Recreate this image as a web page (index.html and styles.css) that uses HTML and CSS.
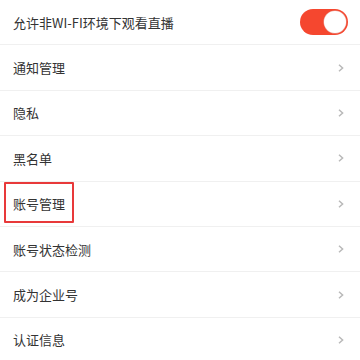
FILE: index.html
```html
<!DOCTYPE html>
<html lang="zh-CN">
<head>
<meta charset="utf-8">
<link rel="stylesheet" href="styles.css">
</head>
<body>
<ul class="list">
  <li class="row">
    <span class="label">允许非WI-FI环境下观看直播</span>
    <span class="switch on"><span class="knob"></span></span>
  </li>
  <li class="row">
    <span class="label">通知管理</span>
    <svg class="chev" viewBox="0 0 6 8" width="6" height="8"><path d="M1 0.8 L4.6 4 L1 7.2" fill="none" stroke="#b9b9b9" stroke-width="1.5"/></svg>
  </li>
  <li class="row">
    <span class="label">隐私</span>
    <svg class="chev" viewBox="0 0 6 8" width="6" height="8"><path d="M1 0.8 L4.6 4 L1 7.2" fill="none" stroke="#b9b9b9" stroke-width="1.5"/></svg>
  </li>
  <li class="row">
    <span class="label">黑名单</span>
    <svg class="chev" viewBox="0 0 6 8" width="6" height="8"><path d="M1 0.8 L4.6 4 L1 7.2" fill="none" stroke="#b9b9b9" stroke-width="1.5"/></svg>
  </li>
  <li class="row">
    <span class="label">账号管理</span>
    <span class="highlight"></span>
    <svg class="chev" viewBox="0 0 6 8" width="6" height="8"><path d="M1 0.8 L4.6 4 L1 7.2" fill="none" stroke="#b9b9b9" stroke-width="1.5"/></svg>
  </li>
  <li class="row">
    <span class="label">账号状态检测</span>
    <svg class="chev" viewBox="0 0 6 8" width="6" height="8"><path d="M1 0.8 L4.6 4 L1 7.2" fill="none" stroke="#b9b9b9" stroke-width="1.5"/></svg>
  </li>
  <li class="row">
    <span class="label">成为企业号</span>
    <svg class="chev" viewBox="0 0 6 8" width="6" height="8"><path d="M1 0.8 L4.6 4 L1 7.2" fill="none" stroke="#b9b9b9" stroke-width="1.5"/></svg>
  </li>
  <li class="row">
    <span class="label">认证信息</span>
    <svg class="chev" viewBox="0 0 6 8" width="6" height="8"><path d="M1 0.8 L4.6 4 L1 7.2" fill="none" stroke="#b9b9b9" stroke-width="1.5"/></svg>
  </li>
</ul>
</body>
</html>
```
FILE: styles.css
```css
html, body {
  margin: 0;
  padding: 0;
  background: #ffffff;
}
body {
  font-family: "Noto Sans CJK SC", "Noto Sans", sans-serif;
  overflow: hidden;
}
.list {
  list-style: none;
  margin: 0;
  padding: 0;
}
.row {
  position: relative;
  box-sizing: border-box;
  height: 45.4px;
  display: flex;
  align-items: center;
  justify-content: space-between;
  padding: 0 16px 0 13px;
  border-bottom: 1.5px solid #f0f0f0;
  background: #fff;
}
.row:first-child {
  padding-right: 12px;
}
.label {
  font-size: 13px;
  color: #333333;
  line-height: 1;
}
.switch {
  width: 48px;
  height: 26px;
  border-radius: 13px;
  background: #f5472f;
  position: relative;
  display: block;
}
.switch .knob {
  position: absolute;
  top: 2px;
  right: 2px;
  width: 22px;
  height: 22px;
  border-radius: 50%;
  background: #fff;
  box-shadow: 0 0 0 0.5px #e8a39a;
}
.chev {
  display: block;
}
.highlight {
  position: absolute;
  left: 4px;
  top: 0;
  width: 70px;
  height: 41px;
  box-sizing: border-box;
  border: 2px solid #e8393a;
  border-radius: 1px;
}
```
